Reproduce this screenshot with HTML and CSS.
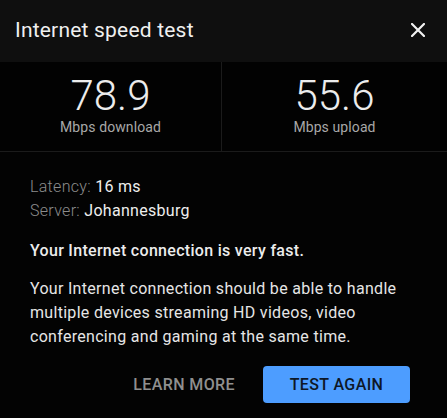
FILE: index.html
```html
<!DOCTYPE html>
<html>
<head>
<meta charset="utf-8">
<link rel="stylesheet" href="styles.css">
</head>
<body>
<div class="dialog">
  <header class="head">
    <h1 class="title">Internet speed test</h1>
    <button class="close" aria-label="Close">
      <svg width="14" height="14" viewBox="0 0 14 14"><path d="M1 1L13 13M13 1L1 13" stroke="#f2f2f2" stroke-width="2.2" stroke-linecap="square"/></svg>
    </button>
  </header>
  <section class="stats">
    <div class="stat">
      <div class="num">78.9</div>
      <div class="unit">Mbps download</div>
    </div>
    <div class="stat">
      <div class="num">55.6</div>
      <div class="unit">Mbps upload</div>
    </div>
  </section>
  <section class="body">
    <div class="meta">
      <div><span class="lbl">Latency:</span> <span class="val">16 ms</span></div>
      <div><span class="lbl">Server:</span> <span class="val">Johannesburg</span></div>
    </div>
    <p class="verdict">Your Internet connection is very fast.</p>
    <p class="desc">Your Internet connection should be able to handle multiple devices streaming HD videos, video conferencing and gaming at the same time.</p>
    <div class="actions">
      <button class="btn text">LEARN MORE</button>
      <button class="btn primary">TEST AGAIN</button>
    </div>
  </section>
</div>
</body>
</html>
```

FILE: styles.css
```css
* { box-sizing: border-box; }
html, body { margin: 0; padding: 0; background: #030303; }
body { font-family: Roboto, "Noto Sans", sans-serif; color: #ececec; width: 447px; height: 418px; overflow: hidden; }
.dialog { display: flex; flex-direction: column; }
.head { height: 62px; background: #0f0f0f; display: flex; align-items: center; justify-content: space-between; padding: 0 22px 0 15px; }
.title { margin: 0; font-size: 21px; font-weight: 400; color: #f0f0f0; letter-spacing: 0.2px; padding-bottom: 2px; }
.close { background: none; border: 0; padding: 0; width: 14px; height: 14px; display: flex; margin-top: -3px; }
.stats { display: grid; grid-template-columns: 222px 1fr; height: 90px; border-bottom: 1px solid #1b1b1b; background: #020202; }
.stat { display: flex; flex-direction: column; align-items: center; padding-top: 10px; }
.stat:first-child { border-right: 1px solid #1b1b1b; }
.num { font-size: 42px; font-weight: 300; line-height: 48px; color: #ececec; }
.unit { font-size: 14px; color: #a8a8a8; line-height: 16px; margin-top: -1px; letter-spacing: 0.1px; }
.body { padding: 23px 30px 0 30px; }
.meta { font-size: 16px; line-height: 24px; letter-spacing: 0.3px; }
.lbl { color: #8c8c8c; font-weight: 300; }
.val { color: #eeeeee; }
.verdict { margin: 16px 0 0 0; font-size: 16px; font-weight: 500; line-height: 24px; color: #ececec; letter-spacing: 0.3px; }
.desc { margin: 14px 0 0 0; font-size: 16px; line-height: 24px; color: #e6e6e6; letter-spacing: 0.3px; }
.actions { display: flex; justify-content: flex-end; align-items: center; gap: 28px; margin-top: 17px; margin-right: 7px; }
.btn { font-family: Roboto, "Noto Sans", sans-serif; font-size: 16px; font-weight: 500; border: 0; background: none; letter-spacing: 0.4px; }
.btn.text { color: #8f8f8f; padding: 0; }
.btn.primary { background: #4d9dff; color: #0d1726; width: 147px; height: 37px; border-radius: 4px; }
```
